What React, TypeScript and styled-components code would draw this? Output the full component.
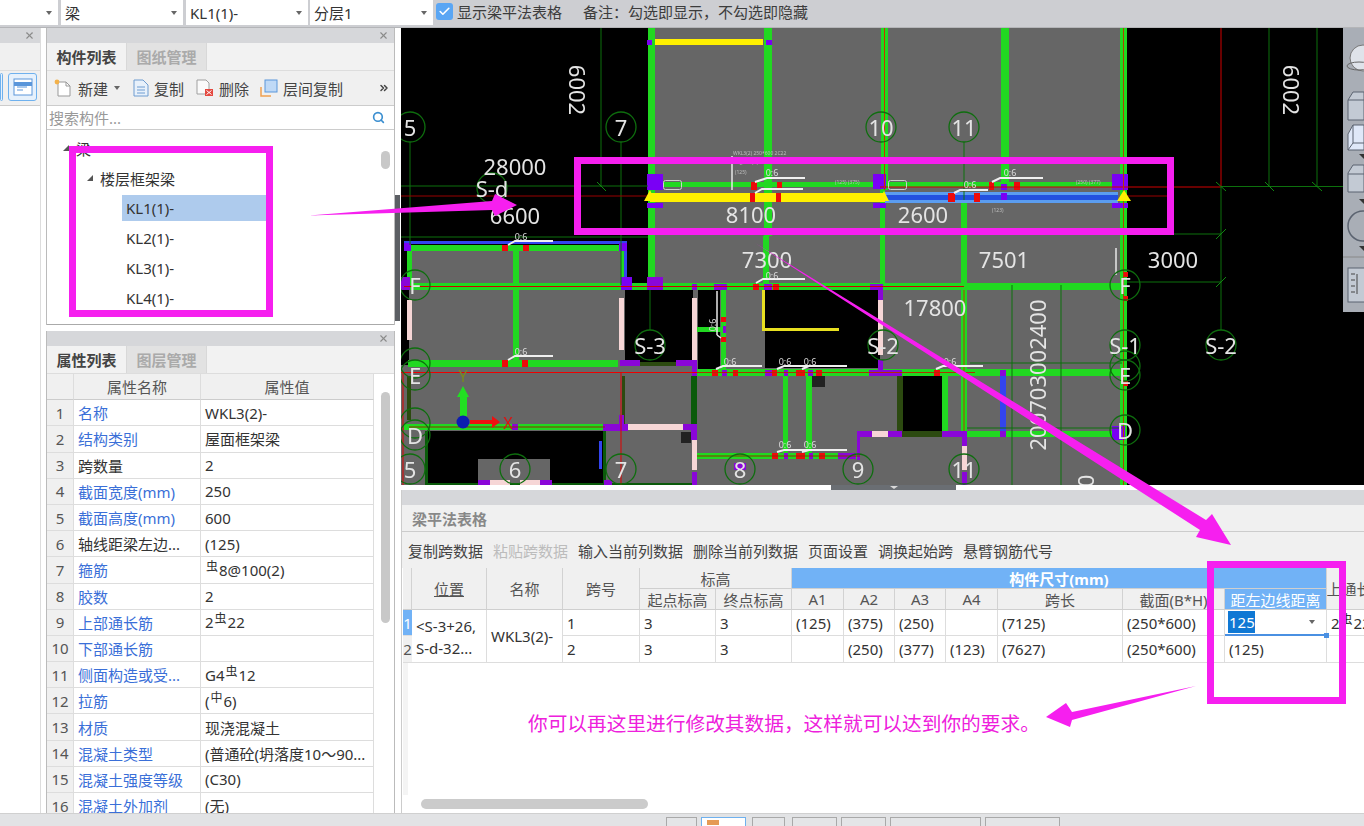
import React from "react";
import styled, { createGlobalStyle } from "styled-components";
import { Check, Search, X, ChevronsRight } from "lucide-react";

const FONT = `"Noto Sans", "Noto Sans CJK SC", sans-serif`;

const Global = createGlobalStyle`
  html, body { margin: 0; padding: 0; background: #fff; }
  * { box-sizing: border-box; }
`;

const Page = styled.div`
  position: relative;
  width: 1364px;
  height: 826px;
  overflow: hidden;
  display: flex;
  flex-direction: column;
  font-family: ${FONT};
  font-size: 15px;
  color: #333;
  background: #fff;
`;

/* ---------- top bar ---------- */
const TopBar = styled.div`
  height: 28px;
  flex: none;
  display: flex;
  align-items: stretch;
  background: #cdced2;
  border-bottom: 1px solid #b4b5b8;
  padding-bottom: 2px;
`;
const Combo = styled.div<{ $w: number; $ml?: number }>`
  width: ${(p) => p.$w}px;
  margin-left: ${(p) => p.$ml ?? 0}px;
  background: #fff;
  display: flex;
  align-items: center;
  justify-content: space-between;
  padding: 0 6px 0 4px;
  line-height: 24px;
`;
const Caret = styled.i`
  width: 0;
  height: 0;
  border-left: 3.5px solid transparent;
  border-right: 3.5px solid transparent;
  border-top: 4px solid #666;
`;
const CheckBox = styled.span`
  width: 17px;
  height: 17px;
  margin: 3px 4px 0 3px;
  background: #5aa6f4;
  border-radius: 3px;
  display: flex;
  align-items: center;
  justify-content: center;
  color: #fff;
`;
const BarLabel = styled.span<{ $ml?: number }>`
  margin-left: ${(p) => p.$ml ?? 0}px;
  line-height: 24px;
  color: #3c3c3c;
`;

/* ---------- main ---------- */
const Main = styled.div`
  flex: 1;
  min-height: 0;
  display: flex;
`;
const Rail = styled.div`
  width: 41px;
  flex: none;
  border-right: 1px solid #ddd;
  display: flex;
  flex-direction: column;
`;
const CloseStrip = styled.div`
  height: 15px;
  flex: none;
  background: #d6d7da;
  display: flex;
  align-items: center;
  justify-content: flex-end;
  padding-right: 5px;
  color: #8b8b8b;
`;
const RailTabs = styled.div`
  height: 28px;
  flex: none;
  background: #f0f0f0;
  border-bottom: 1px solid #ddd;
`;
const RailTools = styled.div`
  height: 35px;
  flex: none;
  background: #f0f0f0;
  border-bottom: 1px solid #ccc;
  display: flex;
  align-items: center;
  gap: 5px;
  padding-bottom: 3px;
`;
const RailButton = styled.div<{ $w: number }>`
  width: ${(p) => p.$w}px;
  height: 28px;
  border: 1.5px solid #6fb1ee;
  border-radius: 3px;
  background: #e6f1fc;
  display: flex;
  align-items: center;
  justify-content: center;
`;
const Dock = styled.div`
  width: 349px;
  margin-left: 5px;
  flex: none;
  display: flex;
  flex-direction: column;
  gap: 6px;
`;
const Panel = styled.section<{ $h?: number }>`
  ${(p) => (p.$h ? `height: ${p.$h}px; flex: none;` : "flex: 1; min-height: 0;")}
  display: flex;
  flex-direction: column;
  overflow: hidden;
  border-left: 1px solid #bbb;
  border-right: 1px solid #bbb;
`;
const TabStrip = styled.div`
  height: 28px;
  flex: none;
  display: flex;
  background: #f2f2f2;
  border-bottom: 1px solid #ddd;
`;
const Tab = styled.div<{ $on?: boolean }>`
  width: 80px;
  display: flex;
  align-items: center;
  justify-content: center;
  font-weight: 700;
  color: ${(p) => (p.$on ? "#444" : "#aaa")};
  background: ${(p) => (p.$on ? "#f2f2f2" : "#e2e2e2")};
  border-right: 1px solid #d8d8d8;
`;
const Tools = styled.div`
  height: 35px;
  flex: none;
  background: #f0f0f0;
  border-bottom: 1px solid #ccc;
  display: flex;
  align-items: center;
  padding: 0 4px 0 6px;
  color: #444;
`;
const ToolItem = styled.span<{ $ml?: number }>`
  display: flex;
  align-items: center;
  gap: 5px;
  margin-left: ${(p) => p.$ml ?? 0}px;
  white-space: nowrap;
`;
const SearchRow = styled.div`
  height: 24px;
  flex: none;
  display: flex;
  align-items: center;
  justify-content: space-between;
  padding: 0 9px 0 2px;
  color: #999;
  border-bottom: 1px solid #ccc;
`;
const Tree = styled.div`
  flex: 1;
  min-height: 0;
  position: relative;
  overflow: hidden;
  border-bottom: 1px solid #aaa;
  padding-top: 3px;
`;
const TreeRow = styled.div<{ $indent: number }>`
  height: 30px;
  display: flex;
  align-items: center;
  padding-left: ${(p) => p.$indent}px;
`;
const TreeLabel = styled.span<{ $on?: boolean }>`
  display: flex;
  align-items: center;
  height: 26px;
  width: 144px;
  padding-left: 4px;
  background: ${(p) => (p.$on ? "#aecbed" : "transparent")};
`;
const Twist = styled.i`
  width: 0;
  height: 0;
  margin-right: 7px;
  border-left: 6px solid transparent;
  border-bottom: 6px solid #555;
`;
const Thumb = styled.div<{ $top: number; $h: number }>`
  position: absolute;
  right: 4px;
  top: ${(p) => p.$top}px;
  width: 9px;
  height: ${(p) => p.$h}px;
  background: #c8c8c8;
  border-radius: 5px;
`;
const PropsArea = styled.div`
  flex: 1;
  min-height: 0;
  position: relative;
  overflow: hidden;
`;
const PropsGrid = styled.div`
  width: 327px;
  display: grid;
  grid-template-columns: 27px 127px 173px;
  grid-auto-rows: 26.2px;
`;
const PropHead = styled.div`
  display: flex;
  align-items: center;
  justify-content: center;
  background: #f0f0f0;
  color: #555;
  border-right: 1px solid #ddd;
  border-bottom: 1px solid #ccc;
`;
const RowNo = styled.div`
  display: flex;
  align-items: center;
  justify-content: center;
  background: #f0f0f0;
  color: #555;
  border-right: 1px solid #ddd;
  border-bottom: 1px solid #ddd;
`;
const PropCell = styled.div<{ $blue?: boolean }>`
  display: flex;
  align-items: center;
  padding-left: 4px;
  white-space: nowrap;
  overflow: hidden;
  color: ${(p) => (p.$blue ? "#3a6fd8" : "#333")};
  border-right: 1px solid #ddd;
  border-bottom: 1px solid #ddd;
`;
const Rebar = styled.span`
  font-size: 12px;
  line-height: 12px;
  position: relative;
  top: -3px;
  margin: 0 1px;
`;
const Splitter = styled.div`
  width: 6px;
  flex: none;
  display: flex;
  flex-direction: column;
  justify-content: flex-start;
`;
const SplitHandle = styled.div`
  margin-top: 167px;
  height: 126px;
  width: 5px;
  background: #5c5f64;
`;

/* ---------- workspace ---------- */
const Workspace = styled.div`
  flex: 1;
  min-width: 0;
  display: flex;
  flex-direction: column;
`;
const Canvas = styled.div`
  position: relative;
  height: 457px;
  flex: none;
  background: #000;
  overflow: hidden;
`;
const CadSvg = styled.svg`
  display: block;
  width: 963px;
  height: 457px;
  filter: blur(0.35px);
`;
const DimText = styled.text`
  fill: #e4e4e4;
  font-family: ${FONT};
  font-size: 22px;
  text-anchor: middle;
  dominant-baseline: central;
`;
const TinyText = styled.text`
  fill: #dcdcdc;
  font-family: ${FONT};
  font-size: 9px;
  text-anchor: middle;
  dominant-baseline: central;
`;
const MicroText = styled.text`
  fill: #bdbdbd;
  font-family: ${FONT};
  font-size: 5px;
`;
const AxisText = styled.text`
  font-family: ${FONT};
  font-size: 16px;
  text-anchor: middle;
  dominant-baseline: central;
`;
const SideTools = styled.div`
  position: absolute;
  right: 0;
  top: 0;
  width: 21px;
  height: 284px;
  background: #a9aeb6;
  overflow: hidden;
`;
const ResizeStrip = styled.div`
  height: 5px;
  flex: none;
  display: flex;
  background: #fff;
`;
const ResizeGrip = styled.div`
  width: 125px;
  margin-left: 430px;
  background: #6a6e73;
  display: flex;
  justify-content: center;
`;
const GripCaret = styled.i`
  width: 0;
  height: 0;
  margin-top: 1px;
  border-left: 4px solid transparent;
  border-right: 4px solid transparent;
  border-top: 3px solid #d8d8d8;
`;
const BottomPanel = styled.section`
  flex: 1;
  min-height: 0;
  display: flex;
  flex-direction: column;
  border-left: 1px solid #ccc;
  position: relative;
`;
const HeaderStrip = styled.div`
  height: 15px;
  flex: none;
  background: #d6d7da;
`;
const TitleBar = styled.div`
  height: 27px;
  flex: none;
  background: #f0f0f0;
  border-bottom: 1px solid #ccc;
  display: flex;
  align-items: center;
  padding-left: 10px;
  font-weight: 700;
  color: #888;
`;
const TableTools = styled.div`
  height: 36px;
  flex: none;
  background: #f0f0f0;
  display: flex;
  align-items: center;
  gap: 10px;
  padding-left: 6px;
  color: #444;
`;
const ToolText = styled.span<{ $off?: boolean }>`
  color: ${(p) => (p.$off ? "#bcbcbc" : "#444")};
  white-space: nowrap;
`;
const TableArea = styled.div`
  flex: 1;
  min-height: 0;
  position: relative;
  overflow: hidden;
  padding-left: 1px;
`;
const BeamGrid = styled.div`
  width: 984px;
  display: grid;
  grid-template-columns: 9px 75px 76px 77px 76px 76px 52px 51px 51px 52px 125px 102px 102px 60px;
  grid-template-rows: 21px 21px 26px 27px;
`;
const HeadCell = styled.div<{ $c: string; $r: string; $tone?: "plain" | "blue"; $bold?: boolean; $under?: boolean }>`
  grid-column: ${(p) => p.$c};
  grid-row: ${(p) => p.$r};
  display: flex;
  align-items: center;
  justify-content: center;
  white-space: nowrap;
  overflow: hidden;
  background: ${(p) => (p.$tone === "blue" ? "#71b2f6" : "#f0f0f0")};
  color: ${(p) => (p.$tone === "blue" ? "#fff" : "#555")};
  font-weight: ${(p) => (p.$bold ? 700 : 400)};
  text-decoration: ${(p) => (p.$under ? "underline" : "none")};
  border-right: 1px solid #d2d2d2;
  border-bottom: 1px solid #cfcfcf;
`;
const NoCell = styled.div<{ $r: string; $on?: boolean }>`
  grid-column: 1;
  grid-row: ${(p) => p.$r};
  display: flex;
  align-items: center;
  justify-content: center;
  overflow: hidden;
  background: ${(p) => (p.$on ? "#71b2f6" : "#f0f0f0")};
  color: ${(p) => (p.$on ? "#fff" : "#555")};
  border-bottom: 1px solid #ddd;
`;
const BodyCell = styled.div<{ $c: string; $r: string }>`
  grid-column: ${(p) => p.$c};
  grid-row: ${(p) => p.$r};
  display: flex;
  align-items: center;
  padding-left: 4px;
  white-space: nowrap;
  overflow: hidden;
  color: #333;
  border-right: 1px solid #ddd;
  border-bottom: 1px solid #ddd;
`;
const PosText = styled.div`
  line-height: 22px;
  padding-top: 1px;
`;
const EditorCell = styled.div`
  grid-column: 13;
  grid-row: 3;
  position: relative;
  display: flex;
  align-items: center;
  justify-content: space-between;
  padding: 0 11px 0 3px;
  border-right: 1px solid #ddd;
  border-bottom: 2px solid #4a90e2;
`;
const Selected = styled.span`
  background: #0f78d4;
  color: #fff;
  line-height: 22px;
  padding-left: 1px;
  width: 27px;
`;
const FillHandle = styled.i`
  position: absolute;
  right: -3px;
  bottom: -4px;
  width: 5px;
  height: 5px;
  background: #4a90e2;
`;
const HScroll = styled.div`
  position: absolute;
  left: 19px;
  bottom: 4px;
  width: 227px;
  height: 10px;
  border-radius: 5px;
  background: #cbcbcb;
`;
const LeftEdge = styled.div`
  position: absolute;
  left: 1px;
  top: 95px;
  width: 5px;
  bottom: 18px;
  background: #f4f4f4;
`;

/* ---------- status bar ---------- */
const StatusBar = styled.footer`
  height: 13px;
  flex: none;
  background: #e2e3e5;
  border-top: 1px solid #d0d0d0;
  display: flex;
  align-items: flex-end;
  padding-left: 666px;
  overflow: hidden;
`;
const StatusButton = styled.div<{ $w: number; $ml: number; $on?: boolean }>`
  width: ${(p) => p.$w}px;
  height: 9px;
  margin-left: ${(p) => p.$ml}px;
  background: ${(p) => (p.$on ? "#fff" : "#e4e5e7")};
  border: 1px solid ${(p) => (p.$on ? "#6fb1ee" : "#a9a9a9")};
  border-bottom: none;
  padding: 2px 0 0 5px;
`;
const StatusIcon = styled.i`
  display: block;
  width: 12px;
  height: 5px;
  background: #e59a55;
`;

/* ---------- overlay ---------- */
const Overlay = styled.svg`
  position: absolute;
  left: 0;
  top: 0;
  width: 1364px;
  height: 826px;
  pointer-events: none;
`;
const Note = styled.div`
  position: absolute;
  left: 528px;
  top: 710px;
  font-size: 19.7px;
  line-height: 28px;
  color: #ee20dc;
  white-space: nowrap;
`;

/* ---------- CAD data ---------- */
type Box = [number, number, number, number, string];
const G = "#21d821";
const DG = "#0d700d";
const RD = "#ee0a0a";
const PU = "#8a06d8";
const VI = "#7a00f5";
const BR = "#2c4a10";
const PK = "#f6d6d6";
const YE = "#fff000";
const BL = "#3344ee";
const GY = "#666666";
const K = "#000000";

const boxes: Box[] = [
  [648, 28, 1122, 485, GY],
  [409, 245, 648, 485, GY],
  [401, 365, 425, 485, GY],
  [622, 245, 648, 285, K],
  [625, 290, 693, 362, K],
  [698, 290, 720, 370, K],
  [765, 290, 880, 368, K],
  [902, 375, 942, 432, K],
  [425, 431, 603, 483, K],
  [478, 459, 550, 483, GY],
  // verticals
  [648, 28, 655, 285, G],
  [764, 28, 772, 236, G],
  [763, 236, 769, 284, G],
  [881, 28, 888, 190, G],
  [880, 190, 885, 284, G],
  [1001, 28, 1009, 182, G],
  [961, 200, 967, 431, G],
  [1120, 28, 1127, 485, G],
  [513, 251, 519, 362, G],
  [407, 251, 412, 285, G],
  [621, 251, 624, 285, G],
  [721, 290, 726, 370, G],
  [783, 376, 788, 453, G],
  [806, 376, 812, 453, G],
  [942, 376, 948, 432, G],
  // dark verticals
  [622, 376, 625, 430, BR],
  [691, 376, 697, 432, "#0a5a0a"],
  [407, 376, 411, 420, BR],
  [897, 375, 903, 432, BR],
  [603, 431, 606, 483, "#0a5a0a"],
  [425, 431, 428, 483, "#0a5a0a"],
  // horizontals
  [408, 245, 622, 251, G],
  [404, 241, 627, 244, BL],
  [624, 243, 627, 278, BL],
  [404, 283, 1122, 290, G],
  [408, 360, 618, 367, G],
  [697, 369, 1122, 376, G],
  [404, 424, 605, 430, G],
  [697, 453, 860, 459, G],
  [967, 431, 1122, 437, G],
  [648, 182, 1122, 187, G],
  [696, 327, 721, 332, G],
  [425, 483, 695, 485, "#0a5a0a"],
  [640, 362, 676, 366, BR],
  [902, 431, 942, 437, BR],
  // pink beams
  [407, 300, 412, 340, PK],
  [619, 298, 624, 350, PK],
  [692, 298, 697, 362, PK],
  [878, 300, 883, 355, PK],
  [624, 424, 683, 430, PK],
  [692, 440, 697, 470, PK],
  [872, 431, 888, 437, PK],
  [962, 446, 967, 470, PK],
  [490, 480, 510, 485, PK],
  [520, 480, 540, 485, PK],
  // blue
  [599, 441, 602, 469, BL],
  [1000, 370, 1006, 436, BL],
  // yellow
  [655, 39, 763, 45, YE],
  [762, 290, 765, 331, "#e8e020"],
  [762, 328, 839, 331, "#e8e020"],
  // top beam
  [650, 193, 885, 202, YE],
  [885, 192, 1118, 203, "#5b9df0"],
  [885, 195, 1118, 200, "#2250e0"],
  // purple
  [647, 40, 652, 45, VI],
  [766, 40, 772, 45, VI],
  [647, 174, 663, 190, VI],
  [647, 203, 663, 208, VI],
  [873, 174, 886, 189, VI],
  [873, 203, 886, 208, VI],
  [1112, 174, 1128, 190, VI],
  [1112, 203, 1128, 208, VI],
  [1001, 184, 1007, 190, VI],
  [1001, 193, 1007, 200, VI],
  [404, 243, 411, 251, VI],
  [619, 243, 627, 251, VI],
  [401, 277, 410, 290, PU],
  [621, 277, 632, 290, VI],
  [647, 277, 663, 290, PU],
  [692, 284, 697, 290, PU],
  [714, 284, 727, 290, PU],
  [764, 284, 772, 290, PU],
  [870, 284, 883, 290, PU],
  [878, 290, 883, 300, PU],
  [878, 360, 883, 376, PU],
  [869, 370, 902, 376, PU],
  [620, 360, 640, 366, PU],
  [676, 360, 697, 366, PU],
  [692, 366, 697, 376, PU],
  [765, 370, 775, 376, PU],
  [784, 370, 788, 376, PU],
  [808, 370, 813, 376, PU],
  [722, 370, 727, 376, PU],
  [723, 326, 726, 333, PU],
  [512, 424, 518, 430, PU],
  [603, 424, 628, 431, PU],
  [619, 415, 624, 430, PU],
  [683, 424, 697, 430, PU],
  [691, 424, 697, 440, PU],
  [692, 472, 697, 485, PU],
  [604, 480, 612, 485, PU],
  [478, 480, 490, 485, PU],
  [540, 480, 552, 485, PU],
  [838, 453, 856, 459, PU],
  [784, 453, 788, 459, PU],
  [809, 453, 813, 459, PU],
  [857, 432, 860, 460, PU],
  [857, 431, 872, 437, PU],
  [888, 431, 902, 437, PU],
  [942, 431, 966, 437, PU],
  [962, 431, 967, 446, PU],
  [962, 472, 967, 485, PU],
  [1000, 370, 1006, 376, PU],
  [1000, 431, 1006, 437, PU],
  [1112, 426, 1125, 440, VI],
  [734, 463, 746, 470, PU],
  // red squares
  [751, 182, 757, 190, RD],
  [777, 182, 782, 190, RD],
  [750, 193, 755, 202, RD],
  [776, 193, 781, 202, RD],
  [989, 182, 994, 190, RD],
  [1014, 182, 1020, 190, RD],
  [948, 193, 955, 202, RD],
  [974, 193, 980, 202, RD],
  [502, 245, 508, 251, RD],
  [523, 245, 529, 251, RD],
  [753, 284, 759, 290, RD],
  [773, 284, 779, 290, RD],
  [502, 360, 508, 367, RD],
  [522, 360, 528, 367, RD],
  [721, 317, 726, 322, RD],
  [721, 337, 726, 342, RD],
  [712, 370, 718, 376, RD],
  [733, 370, 738, 376, RD],
  [772, 370, 777, 376, RD],
  [796, 370, 805, 376, RD],
  [816, 370, 822, 376, RD],
  [772, 453, 778, 459, RD],
  [796, 453, 805, 459, RD],
  [819, 453, 825, 459, RD],
  [934, 370, 940, 376, RD],
  [1123, 272, 1128, 277, RD],
  [1123, 296, 1128, 301, RD],
  [1123, 381, 1128, 386, RD],
  // dark squares
  [681, 432, 691, 443, "#222"],
  [812, 376, 825, 387, "#222"],
];

type Seg = [number, number, number, number, string, number?];
const segs: Seg[] = [
  [601, 28, 601, 187, DG],
  [621, 142, 621, 285, DG],
  [410, 142, 410, 245, DG],
  [964, 142, 964, 200, DG],
  [401, 186, 648, 186, DG],
  [401, 196, 648, 196, "#990000"],
  [1122, 196, 1174, 196, "#990000"],
  [880, 187, 1221, 187, "#d00000"],
  [1221, 186.5, 1343, 186.5, DG],
  [401, 237, 648, 237, DG],
  [1127, 234, 1221, 234, DG],
  [1221, 28, 1221, 186, "#d00000"],
  [1221, 187, 1221, 330, DG],
  [1269, 28, 1269, 186, DG],
  [1317, 28, 1317, 186, DG],
  [650, 290, 650, 330, DG],
  [1127, 282, 1221, 282, DG],
  [967, 428, 1122, 428, DG],
  [970, 363, 1122, 363, DG],
  [1012, 285, 1012, 485, DG],
  [1061, 285, 1061, 485, DG],
  [404, 286.5, 964, 286.5, "#d00000"],
  [697, 372.5, 975, 372.5, "#b03000"],
  [401, 372.5, 697, 372.5, "#ee0000"],
  [621, 372, 621, 485, "#e00000"],
  [409, 427, 605, 427, "#8a3000"],
  [403, 372, 403, 485, "#e00000"],
  [884.5, 28, 884.5, 190, "#c83000"],
  [1123.5, 28, 1123.5, 485, "#b04000"],
  [964, 290, 964, 431, "#b04000"],
  [697, 456, 860, 456, "#8a3000"],
  // ticks
  [597, 182, 606, 191, "#118811"],
  [1216, 182, 1226, 191, "#118811"],
  [1265, 182, 1274, 191, "#118811"],
  [1312, 182, 1322, 191, "#118811"],
  [1216, 239, 1226, 229, "#118811"],
  [1216, 287, 1226, 277, "#118811"],
  // white marks
  [732, 156, 732, 190, "#e8e8e8", 1.5],
  [717, 291, 717, 335, "#e8e8e8", 1.5],
  [717, 335, 721, 338, "#e8e8e8", 1.5],
  [1116, 248, 1116, 275, "#e8e8e8", 1.5],
];

/* rebar hook leaders: start of the bend, knee, end of the flat run, y */
const hooks: [number, number, number, number, number][] = [
  [508, 245, 515, 241, 553],
  [508, 360, 515, 356, 553],
  [756, 283, 763, 279, 805],
  [716, 369, 723, 366, 762],
  [777, 369, 784, 366, 822],
  [802, 369, 809, 366, 847],
  [777, 452, 784, 450, 822],
  [802, 452, 809, 450, 847],
  [936, 369, 943, 366, 983],
  [755, 182, 767, 178, 805],
  [755, 193, 762, 189, 803],
  [954, 193, 960, 190, 988],
  [992, 182, 1000, 178, 1043],
];

const tinyLabels: [number, number][] = [
  [521, 236],
  [521, 351],
  [772, 275],
  [730, 361],
  [785, 361],
  [810, 361],
  [785, 444],
  [810, 444],
  [950, 361],
  [772, 172],
  [970, 184],
  [1010, 172],
];

const bubbles: [number, number, string][] = [
  [410, 127, "5"],
  [621, 127, "7"],
  [881, 127, "10"],
  [964, 127, "11"],
  [492, 188, "S-d"],
  [415, 285, "F"],
  [415, 363, ""],
  [415, 375, "E"],
  [415, 423, ""],
  [415, 435, "D"],
  [410, 469, "5"],
  [515, 469, "6"],
  [621, 469, "7"],
  [740, 469, "8"],
  [858, 469, "9"],
  [964, 469, "11"],
  [650, 345, "S-3"],
  [883, 345, "S-2"],
  [1125, 345, "S-1"],
  [1125, 285, "F"],
  [1125, 366, ""],
  [1125, 375, "E"],
  [1125, 430, "D"],
  [1221, 345, "S-2"],
];

const dims: [number, number, string][] = [
  [515, 166, "28000"],
  [515, 215, "6600"],
  [751, 214, "8100"],
  [923, 214, "2600"],
  [767, 259, "7300"],
  [1004, 259, "7501"],
  [1173, 259, "3000"],
  [935, 307, "17800"],
];

function CadDrawing() {
  return (
    <CadSvg viewBox="401 28 963 457" aria-label="CAD">
      {boxes.map(([a, b, c, d, f], i) => (
        <rect key={i} x={a} y={b} width={c - a} height={d - b} fill={f} />
      ))}
      {segs.map(([a, b, c, d, s, w], i) => (
        <line key={i} x1={a} y1={b} x2={c} y2={d} stroke={s} strokeWidth={w ?? 1} />
      ))}
      <polygon points="644,201 650,190 655,201" fill={YE} />
      <polygon points="879,201 884,191 889,201" fill={YE} />
      <polygon points="1117,201 1124,190 1131,201" fill={YE} />
      <rect x={663.5} y={180.5} width={18} height={9} rx={2} fill="none" stroke="#cfcfcf" />
      <rect x={888.5} y={180.5} width={18} height={9} rx={2} fill="none" stroke="#cfcfcf" />
      <MicroText x={733} y={155}>WKL3(2) 250*600 2C22</MicroText>
      <MicroText x={733} y={164}>C8@100(2)</MicroText>
      <MicroText x={735} y={174}>(125)</MicroText>
      <MicroText x={835} y={184}>(125) (375)</MicroText>
      <MicroText x={1076} y={184}>(250) (377)</MicroText>
      <MicroText x={992} y={212}>(123)</MicroText>
      {hooks.map(([a, b, c, d, e], i) => (
        <polyline key={i} points={`${a},${b} ${c},${d} ${e},${d}`} fill="none" stroke="#f0f0f0" strokeWidth={2} />
      ))}
      {tinyLabels.map(([x, y], i) => (
        <TinyText key={i} x={x} y={y}>0:6</TinyText>
      ))}
      <TinyText x={712} y={325} transform="rotate(-90 712 325)">0:6</TinyText>

      {bubbles.map(([x, y], i) => (
        <circle key={i} cx={x} cy={y} r={15} fill="none" stroke="#0e6e0e" strokeWidth={1.3} />
      ))}
      {bubbles.map(([x, y, t], i) => (
        <DimText key={i} x={x} y={y}>{t}</DimText>
      ))}
      {dims.map(([x, y, t], i) => (
        <DimText key={i} x={x} y={y}>{t}</DimText>
      ))}
      <DimText x={578} y={90} transform="rotate(90 578 90)">6002</DimText>
      <DimText x={1292} y={90} transform="rotate(90 1292 90)">6002</DimText>
      <DimText x={1037} y={375} transform="rotate(-90 1037 375)">200703002400</DimText>
      <DimText x={1085} y={481} transform="rotate(-90 1085 481)">0</DimText>

      <polygon points="460,416 460,397 457,397 463,386 469,397 467,397 467,416" fill="#22e022" />
      <polygon points="470,420 492,420 492,416 500,422 492,428 492,424 470,424" fill="#ee1010" />
      <circle cx={463} cy={422} r={6.5} fill="#0c1eb0" />
      <AxisText x={463} y={376} fill="#7a8a20">Y</AxisText>
      <AxisText x={508} y={423} fill="#e01010">X</AxisText>
    </CadSvg>
  );
}

function SideIcons() {
  return (
    <svg width="21" height="284" viewBox="0 0 21 284" fill="none">
      <circle cx="20" cy="30" r="13" fill="#dfe3ea" stroke="#777" />
      <ellipse cx="16" cy="38" rx="12" ry="4" stroke="#666" fill="none" />
      <path d="M5 72 L10 64 H21 V92 H5 Z" fill="#c3cad4" stroke="#5b6370" />
      <path d="M5 72 H21" stroke="#5b6370" />
      <path d="M5 106 L10 97 H21 V122 H5 Z" fill="#dfe8f8" stroke="#5b6370" />
      <path d="M10 97 V115 H21 M5 122 L10 115" stroke="#5b6370" />
      <path d="M16 126 L21 126 L21 131 Z" fill="#333" />
      <path d="M5 145 L10 137 H21 V164 H5 Z" fill="#c3cad4" stroke="#5b6370" />
      <path d="M5 146 H21" stroke="#5b6370" />
      <path d="M16 171 L21 171 L21 176 Z" fill="#333" />
      <circle cx="20" cy="198" r="15" fill="none" stroke="#5b6370" strokeWidth="1.5" />
      <path d="M16 218 L21 218 L21 223 Z" fill="#333" />
      <path d="M0 229 H21" stroke="#888" />
      <rect x="5" y="240" width="18" height="34" fill="#c3cad4" stroke="#5b6370" />
      <path d="M8 246 h4 M8 252 h4 M8 258 h4 M8 264 h4 M14 246 v20" stroke="#444" />
    </svg>
  );
}

/* small toolbar icons */
const NewIcon = () => (
  <svg width="20" height="20" viewBox="0 0 20 20" fill="none">
    <path d="M5 4 H13 L17 8 V18 H5 Z" fill="#fff" stroke="#999" />
    <path d="M13 4 V8 H17" stroke="#999" />
    <circle cx="4" cy="4" r="2.4" fill="#f3b14a" />
  </svg>
);
const CopyIcon = () => (
  <svg width="16" height="18" viewBox="0 0 16 18" fill="none">
    <path d="M1 1 H10 L15 6 V17 H1 Z" fill="#e8f1fb" stroke="#6e9cd0" />
    <path d="M4 8 H12 M4 11 H12 M4 14 H12" stroke="#6e9cd0" />
  </svg>
);
const DeleteIcon = () => (
  <svg width="18" height="18" viewBox="0 0 18 18" fill="none">
    <path d="M1 1 H10 L13 4 V15 H1 Z" fill="#fafafa" stroke="#a0a0a0" />
    <rect x="9" y="10" width="8" height="7" fill="#e4483f" />
    <path d="M10.5 11.5 L15.5 15.5 M15.5 11.5 L10.5 15.5" stroke="#fff" />
  </svg>
);
const FloorCopyIcon = () => (
  <svg width="18" height="18" viewBox="0 0 18 18" fill="none">
    <path d="M1 8 V17 H11" stroke="#f0a050" strokeWidth="1.5" />
    <rect x="5" y="1" width="12" height="12" fill="#bfd9f6" stroke="#5a96da" />
  </svg>
);
const RailGlyph = () => (
  <svg width="20" height="18" viewBox="0 0 20 18" fill="none">
    <rect x="1" y="1" width="18" height="16" fill="#fff" stroke="#5a96da" />
    <path d="M1 6 H19" stroke="#5a96da" strokeWidth="4" />
    <path d="M4 9 H14 M4 12 H10" stroke="#5a96da" />
  </svg>
);

const Bar = ({ t }: { t: string }) => <Rebar>{t}</Rebar>;

const propRows: [string, boolean, React.ReactNode][] = [
  ["名称", true, "WKL3(2)-"],
  ["结构类别", true, "屋面框架梁"],
  ["跨数量", false, "2"],
  ["截面宽度(mm)", true, "250"],
  ["截面高度(mm)", true, "600"],
  ["轴线距梁左边...", false, "(125)"],
  ["箍筋", true, <><Bar t="虫" />8@100(2)</>],
  ["胶数", true, "2"],
  ["上部通长筋", true, <>2<Bar t="虫" />22</>],
  ["下部通长筋", true, ""],
  ["侧面构造或受...", true, <>G4<Bar t="虫" />12</>],
  ["拉筋", true, <>(<Bar t="中" />6)</>],
  ["材质", true, "现浇混凝土"],
  ["混凝土类型", true, "(普通砼(坍落度10～90..."],
  ["混凝土强度等级", true, "(C30)"],
  ["混凝土外加剂", true, "(无)"],
];

const tableRow1 = ["1", "3", "3", "(125)", "(375)", "(250)", "", "(7125)", "(250*600)"];
const tableRow2 = ["2", "3", "3", "", "(250)", "(377)", "(123)", "(7627)", "(250*600)"];

export default function App() {
  return (
    <Page>
      <Global />
      <TopBar>
        <Combo $w={58}><span /><Caret /></Combo>
        <Combo $w={122} $ml={3}>梁<Caret /></Combo>
        <Combo $w={122} $ml={3}>KL1(1)-<Caret /></Combo>
        <Combo $w={123} $ml={2}>分层1<Caret /></Combo>
        <CheckBox><Check size={13} strokeWidth={3} /></CheckBox>
        <BarLabel>显示梁平法表格</BarLabel>
        <BarLabel $ml={21}>备注：勾选即显示，不勾选即隐藏</BarLabel>
      </TopBar>

      <Main>
        <Rail>
          <CloseStrip><X size={11} strokeWidth={2.4} /></CloseStrip>
          <RailTabs />
          <RailTools>
            <RailButton $w={3} />
            <RailButton $w={29}><RailGlyph /></RailButton>
          </RailTools>
        </Rail>

        <Dock>
          <Panel $h={297}>
            <CloseStrip><X size={11} strokeWidth={2.4} /></CloseStrip>
            <TabStrip>
              <Tab $on>构件列表</Tab>
              <Tab>图纸管理</Tab>
            </TabStrip>
            <Tools>
              <ToolItem><NewIcon />新建</ToolItem>
              <ToolItem $ml={6}><Caret /></ToolItem>
              <ToolItem $ml={13}><CopyIcon />复制</ToolItem>
              <ToolItem $ml={12}><DeleteIcon />删除</ToolItem>
              <ToolItem $ml={11}><FloorCopyIcon />层间复制</ToolItem>
              <ToolItem $ml={35}><ChevronsRight size={12} strokeWidth={3} /></ToolItem>
            </Tools>
            <SearchRow>
              搜索构件...
              <Search size={13} strokeWidth={3} color="#3a8ed0" />
            </SearchRow>
            <Tree>
              <TreeRow $indent={16}><Twist />梁</TreeRow>
              <TreeRow $indent={40}><Twist />楼层框架梁</TreeRow>
              <TreeRow $indent={75}><TreeLabel $on>KL1(1)-</TreeLabel></TreeRow>
              <TreeRow $indent={75}><TreeLabel>KL2(1)-</TreeLabel></TreeRow>
              <TreeRow $indent={75}><TreeLabel>KL3(1)-</TreeLabel></TreeRow>
              <TreeRow $indent={75}><TreeLabel>KL4(1)-</TreeLabel></TreeRow>
              <TreeRow $indent={75}><TreeLabel>KL5(1)-</TreeLabel></TreeRow>
              <Thumb $top={21} $h={18} />
            </Tree>
          </Panel>

          <Panel>
            <CloseStrip><X size={11} strokeWidth={2.4} /></CloseStrip>
            <TabStrip>
              <Tab $on>属性列表</Tab>
              <Tab>图层管理</Tab>
            </TabStrip>
            <PropsArea>
              <PropsGrid>
                <PropHead />
                <PropHead>属性名称</PropHead>
                <PropHead>属性值</PropHead>
                {propRows.map(([name, blue, value], i) => (
                  <React.Fragment key={i}>
                    <RowNo>{i + 1}</RowNo>
                    <PropCell $blue={blue}>{name}</PropCell>
                    <PropCell>{value}</PropCell>
                  </React.Fragment>
                ))}
              </PropsGrid>
              <Thumb $top={18} $h={231} />
            </PropsArea>
          </Panel>
        </Dock>

        <Splitter><SplitHandle /></Splitter>

        <Workspace>
          <Canvas>
            <CadDrawing />
            <SideTools><SideIcons /></SideTools>
          </Canvas>
          <ResizeStrip><ResizeGrip><GripCaret /></ResizeGrip></ResizeStrip>
          <BottomPanel>
            <HeaderStrip />
            <TitleBar>梁平法表格</TitleBar>
            <TableTools>
              <ToolText>复制跨数据</ToolText>
              <ToolText $off>粘贴跨数据</ToolText>
              <ToolText>输入当前列数据</ToolText>
              <ToolText>删除当前列数据</ToolText>
              <ToolText>页面设置</ToolText>
              <ToolText>调换起始跨</ToolText>
              <ToolText>悬臂钢筋代号</ToolText>
            </TableTools>
            <TableArea>
              <BeamGrid>
                <HeadCell $c="1" $r="1 / 3" />
                <HeadCell $c="2" $r="1 / 3" $under>位置</HeadCell>
                <HeadCell $c="3" $r="1 / 3">名称</HeadCell>
                <HeadCell $c="4" $r="1 / 3">跨号</HeadCell>
                <HeadCell $c="5 / 7" $r="1">标高</HeadCell>
                <HeadCell $c="5" $r="2">起点标高</HeadCell>
                <HeadCell $c="6" $r="2">终点标高</HeadCell>
                <HeadCell $c="7 / 14" $r="1" $tone="blue" $bold>构件尺寸(mm)</HeadCell>
                <HeadCell $c="7" $r="2">A1</HeadCell>
                <HeadCell $c="8" $r="2">A2</HeadCell>
                <HeadCell $c="9" $r="2">A3</HeadCell>
                <HeadCell $c="10" $r="2">A4</HeadCell>
                <HeadCell $c="11" $r="2">跨长</HeadCell>
                <HeadCell $c="12" $r="2">截面(B*H)</HeadCell>
                <HeadCell $c="13" $r="2" $tone="blue">距左边线距离</HeadCell>
                <HeadCell $c="14" $r="1 / 3">上通长筋</HeadCell>

                <NoCell $r="3" $on>1</NoCell>
                <NoCell $r="4">2</NoCell>
                <BodyCell $c="2" $r="3 / 5"><PosText>&lt;S-3+26,<br />S-d-32...</PosText></BodyCell>
                <BodyCell $c="3" $r="3 / 5">WKL3(2)-</BodyCell>
                {tableRow1.map((t, i) => (
                  <BodyCell key={i} $c={String(i + 4)} $r="3">{t}</BodyCell>
                ))}
                <EditorCell>
                  <Selected>125</Selected>
                  <Caret />
                  <FillHandle />
                </EditorCell>
                <BodyCell $c="14" $r="3">2<Bar t="虫" />22</BodyCell>
                {tableRow2.map((t, i) => (
                  <BodyCell key={i} $c={String(i + 4)} $r="4">{t}</BodyCell>
                ))}
                <BodyCell $c="13" $r="4">(125)</BodyCell>
                <BodyCell $c="14" $r="4" />
              </BeamGrid>
              <LeftEdge />
              <HScroll />
            </TableArea>
          </BottomPanel>
        </Workspace>
      </Main>

      <StatusBar>
        <StatusButton $w={31} $ml={0} />
        <StatusButton $w={45} $ml={4} $on><StatusIcon /></StatusButton>
        <StatusButton $w={33} $ml={6} />
        <StatusButton $w={45} $ml={7} />
        <StatusButton $w={45} $ml={4} />
        <StatusButton $w={91} $ml={4} />
        <StatusButton $w={75} $ml={4} />
      </StatusBar>

      <Overlay viewBox="0 0 1364 826" fill="none">
        <rect x={72.5} y={149.5} width={197} height={164} stroke="#f61fef" strokeWidth={7} />
        <rect x={577.5} y={160.5} width={593} height={71} stroke="#f61fef" strokeWidth={7} />
        <rect x={1210.5} y={564.5} width={132} height={136} stroke="#f61fef" strokeWidth={7} />
        <polygon points="309,215.5 492,201 495,194 517,205 495,216 492,210" fill="#f61fef" />
        <polygon points="755,243 1206,520 1212,514 1231,545 1196,537 1200,530" fill="#f61fef" />
        <polygon points="1196,686 1072,712 1066,703 1046,717 1070,727 1072,720" fill="#f61fef" />
      </Overlay>
      <Note>你可以再这里进行修改其数据，这样就可以达到你的要求。</Note>
    </Page>
  );
}
